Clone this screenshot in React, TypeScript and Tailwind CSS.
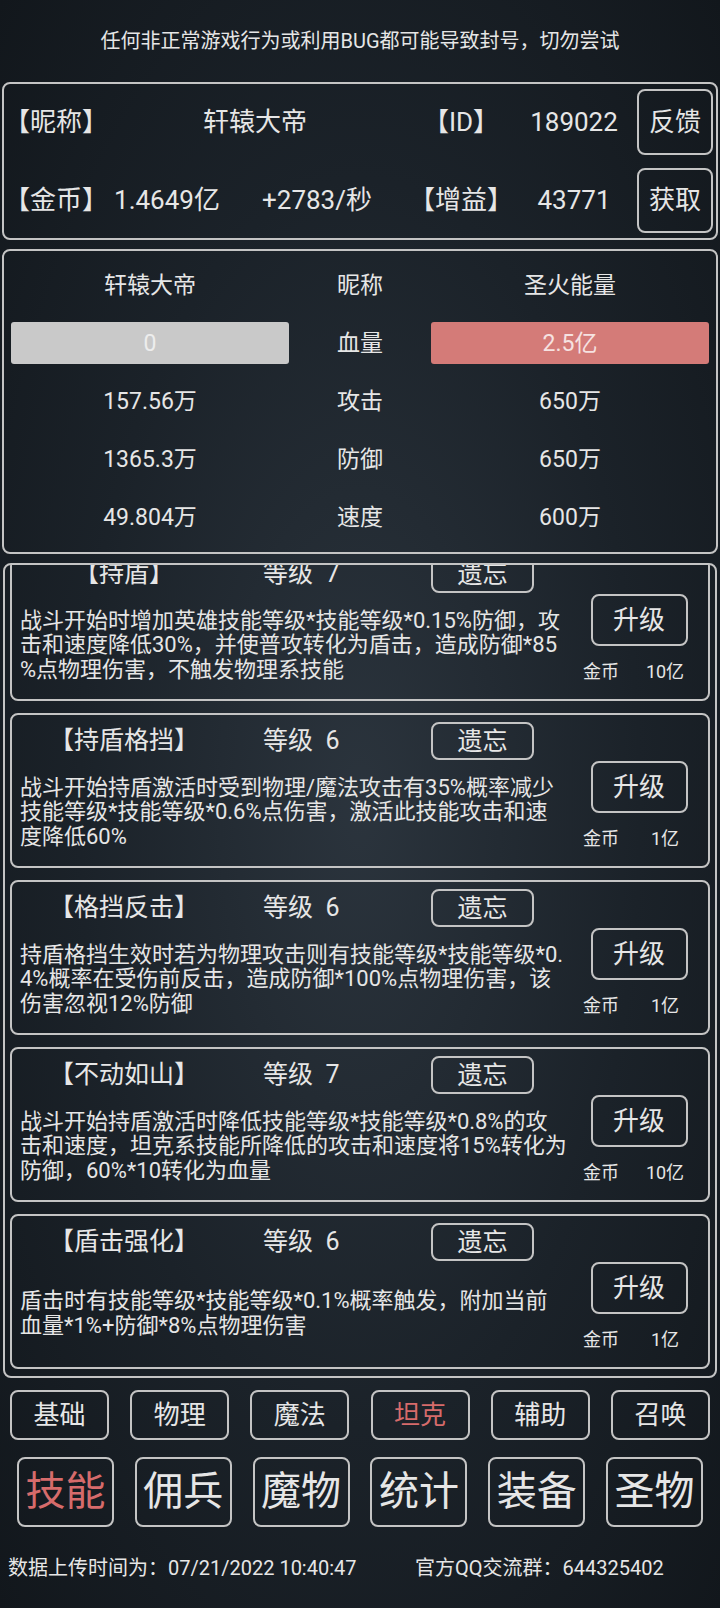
import React from 'react';

type Skill = {
  name: string;
  level: number;
  lines: string[];
  cost: string;
};

// description lines are wrapped exactly as the game wraps them (char by char)
const skills: Skill[] = [
  {
    name: '持盾',
    level: 7,
    lines: [
      '战斗开始时增加英雄技能等级*技能等级*0.15%防御，攻',
      '击和速度降低30%，并使普攻转化为盾击，造成防御*85',
      '%点物理伤害，不触发物理系技能',
    ],
    cost: '10亿',
  },
  {
    name: '持盾格挡',
    level: 6,
    lines: [
      '战斗开始持盾激活时受到物理/魔法攻击有35%概率减少',
      '技能等级*技能等级*0.6%点伤害，激活此技能攻击和速',
      '度降低60%',
    ],
    cost: '1亿',
  },
  {
    name: '格挡反击',
    level: 6,
    lines: [
      '持盾格挡生效时若为物理攻击则有技能等级*技能等级*0.',
      '4%概率在受伤前反击，造成防御*100%点物理伤害，该',
      '伤害忽视12%防御',
    ],
    cost: '1亿',
  },
  {
    name: '不动如山',
    level: 7,
    lines: [
      '战斗开始持盾激活时降低技能等级*技能等级*0.8%的攻',
      '击和速度，坦克系技能所降低的攻击和速度将15%转化为',
      '防御，60%*10转化为血量',
    ],
    cost: '10亿',
  },
  {
    name: '盾击强化',
    level: 6,
    lines: ['盾击时有技能等级*技能等级*0.1%概率触发，附加当前', '血量*1%+防御*8%点物理伤害'],
    cost: '1亿',
  },
];

const stats = [
  { left: '157.56万', label: '攻击', right: '650万' },
  { left: '1365.3万', label: '防御', right: '650万' },
  { left: '49.804万', label: '速度', right: '600万' },
];

const tabs = ['基础', '物理', '魔法', '坦克', '辅助', '召唤'];
const navs = ['技能', '佣兵', '魔物', '统计', '装备', '圣物'];

function Btn({ children, className = '' }: { children: React.ReactNode; className?: string }) {
  return (
    <button className={`border-2 border-[#c4c4c4] rounded-[8px] flex items-center justify-center leading-none ${className}`}>
      {children}
    </button>
  );
}

function SkillCard({ skill }: { skill: Skill }) {
  return (
    <div className="h-[155px] shrink-0 border-2 border-[#c4c4c4] rounded-[8px] flex">
      <div className="w-[558px] flex flex-col">
        {/* header */}
        <div className="h-[52px] flex items-center text-[25px]">
          <span className="w-[224px] text-center">【{skill.name}】</span>
          <span className="ml-[27px] w-[168px] whitespace-pre">等级  {skill.level}</span>
          <Btn className="w-[103px] h-[38px] text-[25px]">遗忘</Btn>
        </div>
        {/* description */}
        <div className="flex-1 pb-[8px] pl-[8px] flex items-center">
          <p className="text-[22px] leading-[24.5px] whitespace-nowrap">
            {skill.lines.map((l, i) => (
              <span key={i} className="block">
                {l}
              </span>
            ))}
          </p>
        </div>
      </div>
      <div className="w-[138px] flex flex-col items-center pt-[46px]">
        <Btn className="w-[97px] h-[52px] text-[26px]">升级</Btn>
        <div className="mt-[13px] h-[24px] self-stretch flex items-center text-[18px]">
          <span className="w-[62px] text-center">金币</span>
          <span className="w-[66px] text-center">{skill.cost}</span>
        </div>
      </div>
    </div>
  );
}

export default function App() {
  return (
    <div className="w-[720px] h-[1608px] overflow-hidden bg-[radial-gradient(ellipse_at_center,#2b343d_0%,#1b2229_55%,#12171c_100%)] text-[#e6e6e6] font-[Roboto,'Noto_Sans_CJK_SC',sans-serif]">
      {/* notice */}
      <div className="h-[82px] flex items-center justify-center text-[20px]">
        任何非正常游戏行为或利用BUG都可能导致封号，切勿尝试
      </div>

      {/* player info */}
      <div className="mx-[2px] h-[158px] border-2 border-[#c4c4c4] rounded-[8px] flex flex-col text-[26px] leading-none">
        <div className="flex-1 flex items-center">
          <span className="w-[104px]">【昵称】</span>
          <span className="w-[294px] text-center">轩辕大帝</span>
          <span className="w-[118px] text-center">【ID】</span>
          <span className="w-[108px] text-center">189022</span>
          <Btn className="ml-[9px] w-[76px] h-[66px] text-[26px]">反馈</Btn>
        </div>
        <div className="flex-1 flex items-center pt-[3px]">
          <span className="w-[104px]">【金币】</span>
          <span className="w-[118px] text-center">1.4649亿</span>
          <span className="w-[182px] text-center">+2783/秒</span>
          <span className="w-[106px] text-center">【增益】</span>
          <span className="w-[120px] text-center">43771</span>
          <Btn className="ml-[3px] w-[76px] h-[65px] text-[26px]">获取</Btn>
        </div>
      </div>

      {/* battle stats */}
      <div className="mt-[9px] mx-[2px] h-[305px] border-2 border-[#c4c4c4] rounded-[8px] pt-[5px] px-[7px] text-[23px] leading-none">
        <div className="grid grid-cols-[278px_142px_278px] auto-rows-[58px] items-center text-center">
          <span>轩辕大帝</span>
          <span>昵称</span>
          <span>圣火能量</span>

          <div className="h-[42px] rounded-[3px] bg-[#c9c9c9] text-[#ededed] flex items-center justify-center">0</div>
          <span>血量</span>
          <div className="h-[42px] rounded-[3px] bg-[#d47b78] text-[#f6e2e1] flex items-center justify-center">2.5亿</div>

          {stats.map((s) => (
            <React.Fragment key={s.label}>
              <span>{s.left}</span>
              <span>{s.label}</span>
              <span>{s.right}</span>
            </React.Fragment>
          ))}
        </div>
      </div>

      {/* skill list (scrolled) */}
      <div className="mt-[9px] mx-[3px] h-[815px] border-2 border-[#c4c4c4] rounded-[8px] overflow-hidden px-[5px]">
        <div className="-mt-[19px] flex flex-col gap-[12px]">
          {skills.map((s) => (
            <SkillCard key={s.name} skill={s} />
          ))}
        </div>
      </div>

      {/* category tabs */}
      <div className="mt-[12px] px-[10px] flex justify-between">
        {tabs.map((t) => (
          <Btn key={t} className={`w-[99px] h-[50px] text-[26px] ${t === '坦克' ? 'text-[#d66b6b]' : ''}`}>
            {t}
          </Btn>
        ))}
      </div>

      {/* main nav */}
      <div className="mt-[17px] px-[17px] flex justify-between">
        {navs.map((n) => (
          <Btn key={n} className={`w-[97px] h-[70px] text-[40px] ${n === '技能' ? 'text-[#d66b6b]' : ''}`}>
            {n}
          </Btn>
        ))}
      </div>

      {/* footer */}
      <div className="mt-[27px] h-[28px] flex items-center text-[20px]">
        <span className="w-[415px] pl-[8px]">数据上传时间为：07/21/2022 10:40:47</span>
        <span>官方QQ交流群：644325402</span>
      </div>
    </div>
  );
}
